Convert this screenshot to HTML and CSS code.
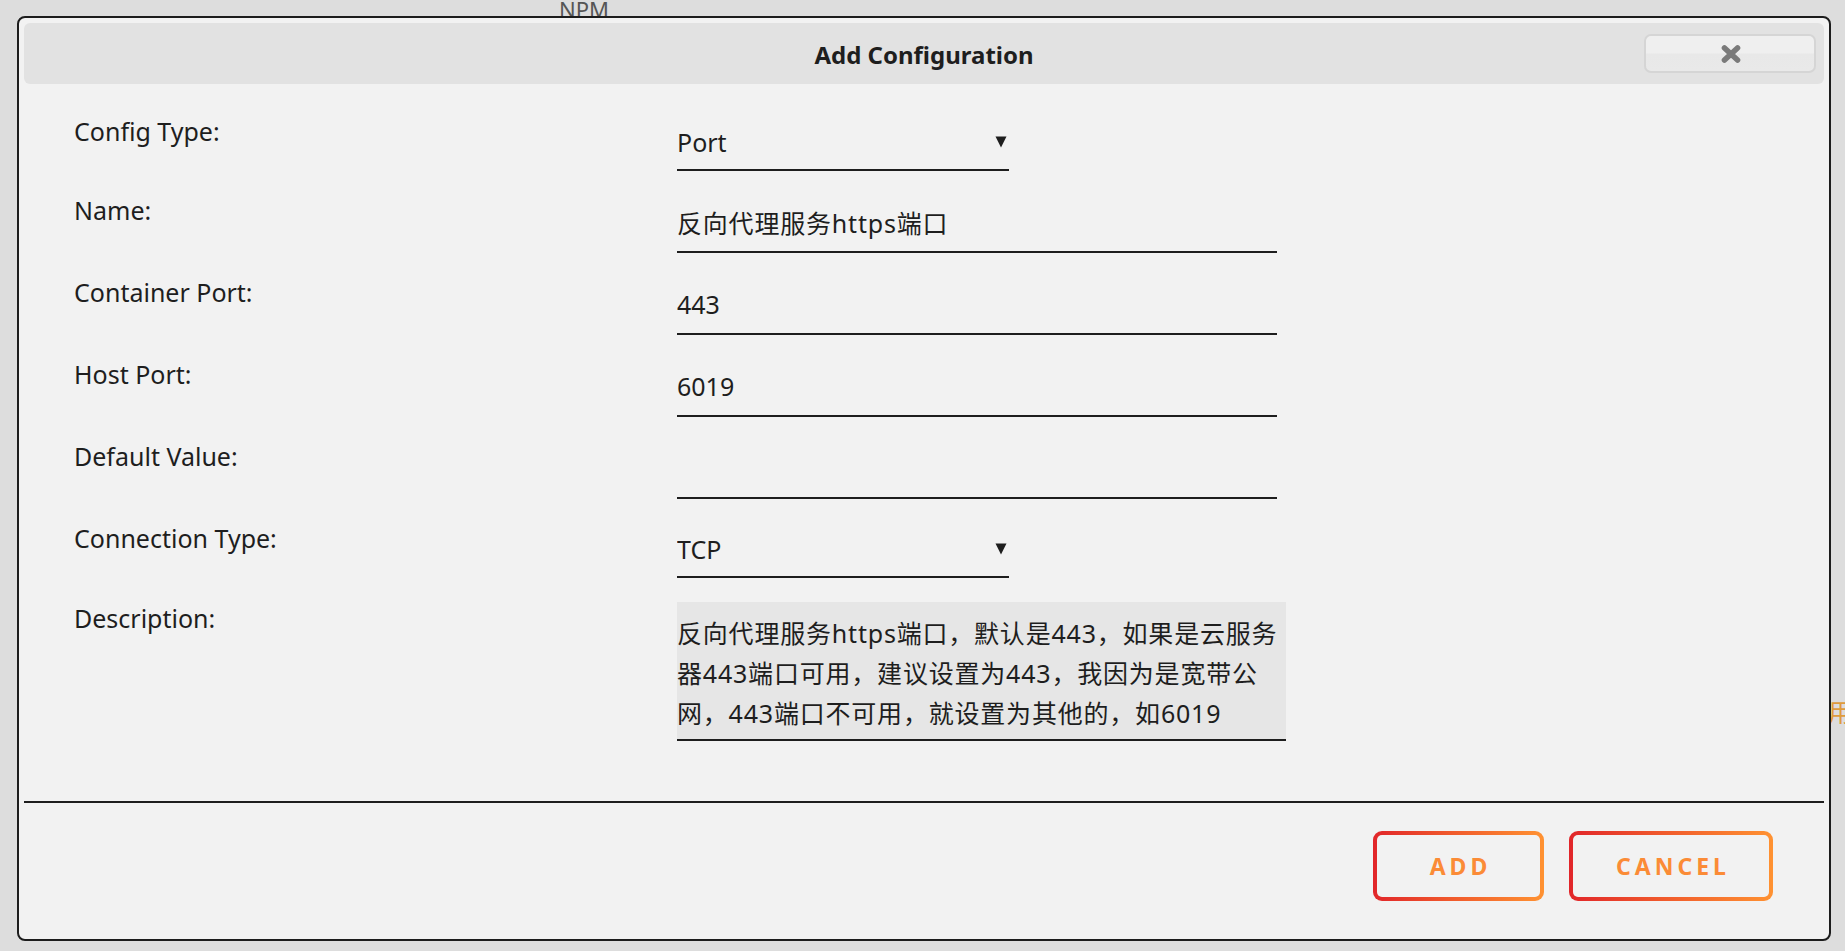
FILE: index.html
```html
<!DOCTYPE html>
<html lang="en">
<head>
<meta charset="utf-8">
<title>Add Configuration</title>
<link rel="stylesheet" href="styles.css">
</head>
<body>
<div class="page">
  <div class="bg-label">NPM</div>
  <div class="bg-side">用户</div>

  <div class="dialog">
    <div class="dlg-header">
      <span class="dlg-spacer"></span>
      <h2 class="dlg-title">Add Configuration</h2>
      <button class="dlg-close" type="button" aria-label="Close">
        <svg width="20" height="18" viewBox="0 0 20 18"><path d="M3.5 3 L16.5 15 M16.5 3 L3.5 15" stroke="#7a7a7a" stroke-width="5.6" stroke-linecap="round" fill="none"/></svg>
      </button>
    </div>

    <div class="dlg-body">
      <div class="row">
        <label class="lbl">Config Type:</label>
        <div class="select-wrap">
          <select class="select"><option>Port</option><option>Path</option><option>Variable</option></select>
          <svg class="arrow" width="12" height="12" viewBox="0 0 12 12"><polygon points="0.5,0.5 11.5,0.5 6,11.5" fill="#1e1e1e"/></svg>
        </div>
      </div>
      <div class="row">
        <label class="lbl">Name:</label>
        <input class="field cjk" type="text" value="反向代理服务https端口">
      </div>
      <div class="row">
        <label class="lbl">Container Port:</label>
        <input class="field" type="text" value="443">
      </div>
      <div class="row">
        <label class="lbl">Host Port:</label>
        <input class="field" type="text" value="6019">
      </div>
      <div class="row">
        <label class="lbl">Default Value:</label>
        <input class="field" type="text" value="">
      </div>
      <div class="row">
        <label class="lbl">Connection Type:</label>
        <div class="select-wrap">
          <select class="select"><option>TCP</option><option>UDP</option></select>
          <svg class="arrow" width="12" height="12" viewBox="0 0 12 12"><polygon points="0.5,0.5 11.5,0.5 6,11.5" fill="#1e1e1e"/></svg>
        </div>
      </div>
      <div class="row">
        <label class="lbl">Description:</label>
        <div class="textarea cjk">反向代理服务https端口，默认是443，如果是云服务<br>器443端口可用，建议设置为443，我因为是宽带公<br>网，443端口不可用，就设置为其他的，如6019</div>
      </div>
    </div>

    <div class="dlg-footer">
      <button class="btn btn-add" type="button">ADD</button>
      <button class="btn btn-cancel" type="button">CANCEL</button>
    </div>
  </div>
</div>
</body>
</html>
```

FILE: styles.css
```css
html, body {
  margin: 0;
  padding: 0;
}
body {
  background: #dddddd;
  font-family: "Noto Sans", "Noto Sans CJK SC", sans-serif;
  color: #1e1e1e;
  overflow: hidden;
}
.page {
  position: relative;
  width: 1845px;
  height: 951px;
  overflow: hidden;
}
.bg-label {
  position: absolute;
  left: 559px;
  top: -2px;
  font-size: 22px;
  line-height: 22px;
  color: #555555;
}
.bg-side {
  position: absolute;
  left: 1828px;
  top: 700px;
  font-size: 25px;
  line-height: 25px;
  color: #df9b3b;
  white-space: nowrap;
}
.dialog {
  position: absolute;
  left: 17px;
  top: 16px;
  width: 1814px;
  box-sizing: border-box;
  border: 2px solid #1c1c1c;
  border-radius: 8px;
  background: #f2f2f2;
  padding: 5px;
  z-index: 1;
}
.dlg-header {
  height: 61px;
  background: #e2e2e2;
  border-radius: 6px;
  display: grid;
  grid-template-columns: 1fr auto 1fr;
  align-items: center;
}
.dlg-title {
  margin: 0;
  font-size: 24px;
  font-weight: 700;
  color: #1e1e1e;
  line-height: 30px;
  padding-top: 2px;
}
.dlg-close {
  justify-self: end;
  align-self: start;
  margin: 11px 8px 0 0;
  width: 172px;
  height: 39px;
  box-sizing: border-box;
  border: 2px solid #d5d5d5;
  border-radius: 7px;
  background: linear-gradient(#efefef 0, #efefef 48%, #e8e8e8 52%, #e9e9e9 100%);
  display: flex;
  align-items: center;
  justify-content: center;
  padding: 0;
}
.dlg-close svg {
  display: block;
  margin-left: 2px;
}
.dlg-body {
  padding: 30.5px 0 60px 50px;
  display: flex;
  flex-direction: column;
  gap: 23.5px;
}
.row {
  display: flex;
  align-items: flex-start;
}
.lbl {
  width: 603px;
  flex-shrink: 0;
  font-size: 25px;
  line-height: 32px;
  color: #1e1e1e;
}
.select-wrap {
  display: grid;
  width: 332px;
}
.select-wrap > * {
  grid-area: 1 / 1;
}
.select {
  appearance: none;
  -webkit-appearance: none;
  box-sizing: border-box;
  width: 332px;
  height: 56px;
  margin: 0;
  padding: 0;
  border: 0;
  border-bottom: 2px solid #1e1e1e;
  border-radius: 0;
  background: transparent;
  font-family: "Noto Sans", "Noto Sans CJK SC", sans-serif;
  font-size: 25px;
  color: #1e1e1e;
  outline: none;
}
.arrow {
  justify-self: end;
  align-self: start;
  margin: 21px 2px 0 0;
  pointer-events: none;
}
.field {
  box-sizing: border-box;
  width: 600px;
  height: 58.5px;
  margin: 0;
  padding: 0;
  border: 0;
  border-bottom: 2px solid #1e1e1e;
  border-radius: 0;
  background: transparent;
  font-family: "Noto Sans", "Noto Sans CJK SC", sans-serif;
  font-size: 25px;
  color: #1e1e1e;
  outline: none;
}
.cjk {
  letter-spacing: 0.8px;
}
.textarea {
  box-sizing: border-box;
  width: 609px;
  height: 139px;
  padding: 11px 0 6px 0;
  line-height: 40px;
  font-size: 25px;
  background: #e6e6e6;
  border-bottom: 2px solid #1e1e1e;
  white-space: nowrap;
  color: #1e1e1e;
}
.dlg-footer {
  border-top: 2px solid #1e1e1e;
  padding: 28px 51px 33px 0;
  display: flex;
  justify-content: flex-end;
  gap: 25px;
}
.btn {
  height: 70px;
  box-sizing: border-box;
  border: 4px solid transparent;
  border-radius: 9px;
  background:
    linear-gradient(#f2f2f2, #f2f2f2) padding-box,
    linear-gradient(90deg, #e1262a 0%, #f0592c 45%, #ff9232 100%) border-box;
  font-family: "Noto Sans", sans-serif;
  font-weight: 700;
  font-size: 23px;
  letter-spacing: 4px;
  color: #fb8b36;
  padding: 0 0 0 4px;
  cursor: pointer;
}
.btn-add {
  width: 171px;
}
.btn-cancel {
  width: 204px;
}
```
